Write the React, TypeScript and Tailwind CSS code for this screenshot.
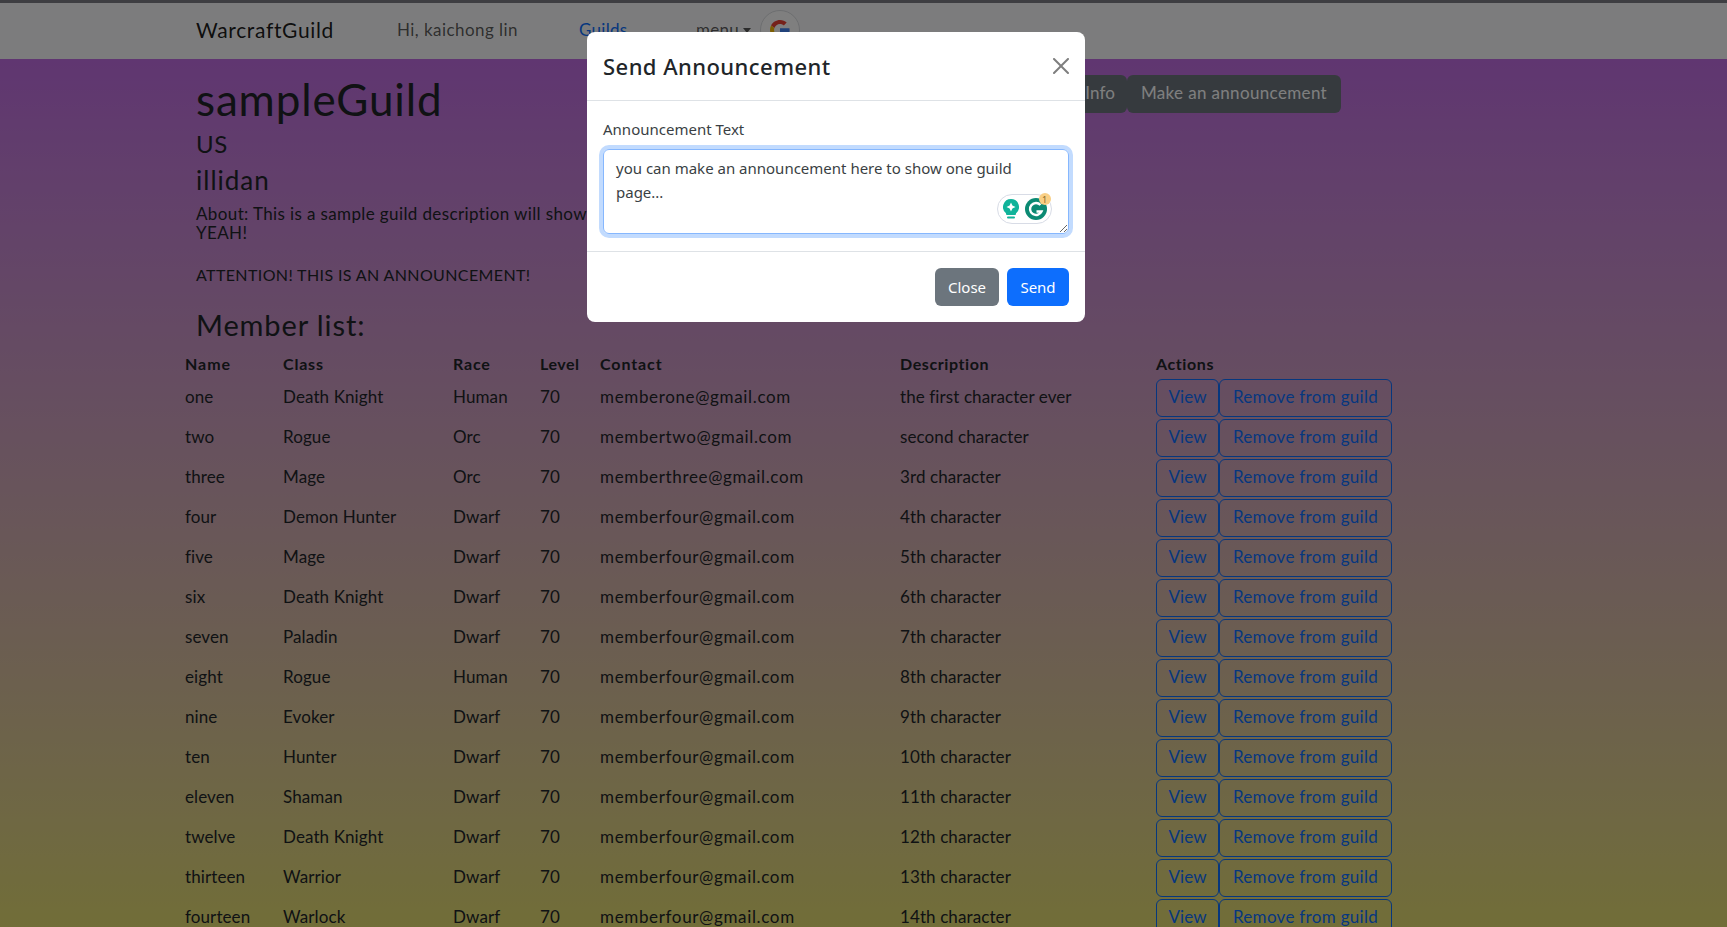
import React from "react";

const members = [
  ["one", "Death Knight", "Human", "memberone@gmail.com", "the first character ever"],
  ["two", "Rogue", "Orc", "membertwo@gmail.com", "second character"],
  ["three", "Mage", "Orc", "memberthree@gmail.com", "3rd character"],
  ["four", "Demon Hunter", "Dwarf", "memberfour@gmail.com", "4th character"],
  ["five", "Mage", "Dwarf", "memberfour@gmail.com", "5th character"],
  ["six", "Death Knight", "Dwarf", "memberfour@gmail.com", "6th character"],
  ["seven", "Paladin", "Dwarf", "memberfour@gmail.com", "7th character"],
  ["eight", "Rogue", "Human", "memberfour@gmail.com", "8th character"],
  ["nine", "Evoker", "Dwarf", "memberfour@gmail.com", "9th character"],
  ["ten", "Hunter", "Dwarf", "memberfour@gmail.com", "10th character"],
  ["eleven", "Shaman", "Dwarf", "memberfour@gmail.com", "11th character"],
  ["twelve", "Death Knight", "Dwarf", "memberfour@gmail.com", "12th character"],
  ["thirteen", "Warrior", "Dwarf", "memberfour@gmail.com", "13th character"],
  ["fourteen", "Warlock", "Dwarf", "memberfour@gmail.com", "14th character"],
];

function GoogleG() {
  return (
    <svg width="20" height="20" viewBox="0 0 48 48">
      <path fill="#EA4335" d="M24 9.5c3.54 0 6.71 1.22 9.21 3.6l6.85-6.85C35.9 2.38 30.47 0 24 0 14.62 0 6.51 5.38 2.56 13.22l7.98 6.19C12.43 13.72 17.74 9.5 24 9.5z" />
      <path fill="#4285F4" d="M46.98 24.55c0-1.57-.15-3.09-.38-4.55H24v9.02h12.94c-.58 2.96-2.26 5.48-4.78 7.18l7.73 6c4.51-4.18 7.09-10.36 7.09-17.65z" />
      <path fill="#FBBC05" d="M10.53 28.59c-.48-1.45-.76-2.99-.76-4.59s.27-3.14.76-4.59l-7.98-6.19C.92 16.46 0 20.12 0 24c0 3.88.92 7.54 2.56 10.78l7.97-6.19z" />
      <path fill="#34A853" d="M24 48c6.48 0 11.93-2.13 15.89-5.81l-7.73-6c-2.15 1.45-4.92 2.3-8.16 2.3-6.26 0-11.57-4.22-13.47-9.91l-7.98 6.19C6.51 42.62 14.62 48 24 48z" />
    </svg>
  );
}

export default function App() {
  return (
    <div className="relative h-[927px] overflow-hidden bg-[#f8f9fa] font-['Lato',sans-serif] text-[16px] text-[#212529]">
      <div className="h-[3px] bg-[#7c7c84]" />
      <nav className="flex h-[56px] items-center bg-[#f8f9fa] pb-[2px] pl-[196px]">
        <span className="w-[201px] text-[21px] tracking-[0.65px] text-[#000000e6]">WarcraftGuild</span>
        <span className="w-[182px] text-[17px] tracking-[0.45px] text-[#000000a6]">Hi, kaichong lin</span>
        <span className="w-[117px] text-[17px] tracking-[0.3px] text-[#0d6efd]">Guilds</span>
        <span className="flex w-[64px] items-center gap-[4px] text-[17px] tracking-[0.3px] text-[#000000a6]">
          menu
          <span className="h-0 w-0 border-x-[4px] border-t-[5px] border-x-transparent border-t-[#000000a6]" />
        </span>
        <span className="flex h-[40px] w-[40px] items-center justify-center rounded-full border border-[#dadce0] bg-white">
          <GoogleG />
        </span>
      </nav>

      <main className="h-[868px] bg-gradient-to-b from-[#c06ce2] to-[#e3dc70]">
        <div className="flex pl-[196px] pt-[16px]">
          <section className="w-[811px] shrink-0">
            <h1 className="text-[44px] leading-[48px] tracking-[0.85px] text-[#212529]">sampleGuild</h1>
            <h3 className="mt-[6px] text-[24px] leading-[29px] tracking-[0.7px]">US</h3>
            <h3 className="mt-[8px] text-[26px] leading-[29px] tracking-[1px]">illidan</h3>
            <p className="mt-[9px] text-[17px] leading-[19px] tracking-[0.38px]">
              About: This is a sample guild description will show here
              <br />
              YEAH!
            </p>
            <p className="mt-[23px] leading-[19px] tracking-[0.38px]">ATTENTION! THIS IS AN ANNOUNCEMENT!</p>
          </section>
          <div className="flex h-[38px] items-start">
            <button className="h-[38px] w-[120px] rounded-[6px] bg-[#6c757d] px-[12px] pb-[2px] text-right text-[17px] tracking-[0.1px] text-white">Edit Info</button>
            <button className="h-[38px] w-[214px] rounded-[6px] bg-[#6c757d] pb-[2px] text-[17px] tracking-[0.35px] text-white">Make an announcement</button>
          </div>
        </div>
        <h2 className="mt-[24px] pl-[196px] text-[29px] leading-[34px] tracking-[0.9px]">Member list:</h2>
        <div className="pl-[185px] pt-[10px]">
          <table className="w-[1207px] table-fixed border-collapse text-left">
            <thead>
              <tr className="h-[26px]">
                <th className="w-[98px] pb-[2px] font-bold tracking-[0.95px]">Name</th>
                <th className="w-[170px] pb-[2px] font-bold tracking-[0.8px]">Class</th>
                <th className="w-[87px] pb-[2px] font-bold tracking-[0.8px]">Race</th>
                <th className="w-[60px] pb-[2px] font-bold tracking-[0.5px]">Level</th>
                <th className="w-[300px] pb-[2px] font-bold tracking-[0.9px]">Contact</th>
                <th className="w-[256px] pb-[2px] font-bold tracking-[0.6px]">Description</th>
                <th className="pb-[2px] font-bold tracking-[0.6px]">Actions</th>
              </tr>
            </thead>
            <tbody className="text-[17px] tracking-[0.1px]">
              {members.map((m) => (
                <tr key={m[0]} className="h-[40px]">
                  <td className="pb-[2px]">{m[0]}</td>
                  <td className="pb-[2px]">{m[1]}</td>
                  <td className="pb-[2px]">{m[2]}</td>
                  <td className="pb-[2px]">70</td>
                  <td className="pb-[2px] tracking-[0.65px]">{m[3]}</td>
                  <td className="pb-[2px]">{m[4]}</td>
                  <td>
                    <div className="flex">
                      <button className="h-[38px] w-[63px] rounded-[6px] border border-[#0d6efd] pb-[2px] text-[#0d6efd]">View</button>
                      <button className="h-[38px] w-[173px] rounded-[6px] border border-[#0d6efd] pb-[2px] tracking-[0.3px] text-[#0d6efd]">Remove from guild</button>
                    </div>
                  </td>
                </tr>
              ))}
            </tbody>
          </table>
        </div>
      </main>

      <div className="fixed inset-0 bg-black/50" />

      <div className="fixed left-[587px] top-[32px] h-[290px] w-[498px] rounded-[8px] bg-white font-['Noto_Sans',sans-serif] text-[#212529]">
        <div className="flex h-[69px] items-center justify-between border-b border-[#dee2e6] px-[16px]">
          <h5 className="text-[22px] font-medium tracking-[0.45px]">Send Announcement</h5>
          <svg width="16" height="16" viewBox="0 0 16 16" className="opacity-50">
            <path d="M.293.293a1 1 0 0 1 1.414 0L8 6.586 14.293.293a1 1 0 1 1 1.414 1.414L9.414 8l6.293 6.293a1 1 0 0 1-1.414 1.414L8 9.414l-6.293 6.293a1 1 0 0 1-1.414-1.414L6.586 8 .293 1.707a1 1 0 0 1 0-1.414z" />
          </svg>
        </div>
        <div className="h-[151px] border-b border-[#dee2e6] px-[16px] pt-[16px]">
          <label className="block text-[15px] leading-[24px] text-[#3a3f44]">Announcement Text</label>
          <div className="relative mt-[8px]">
            <textarea
              readOnly
              className="block h-[85px] w-[466px] rounded-[6px] border border-[#86b7fe] px-[12px] py-[6px] text-[15px] leading-[24px] text-[#3a3f44] shadow-[0_0_0_4px_#c2dbfe] outline-none"
              defaultValue="you can make an announcement here to show one guild page..."
            />
            <div className="absolute left-[394px] top-[45px] flex h-[30px] w-[55px] items-center justify-center gap-[6px] rounded-full border border-[#d8dce6] bg-white">
              <svg width="16" height="20" viewBox="0 0 16 20">
                <path fill="#10b39a" d="M8 0a8 8 0 0 0-5 14.2V15a1 1 0 0 0 1 1h8a1 1 0 0 0 1-1v-.8A8 8 0 0 0 8 0z" />
                <path fill="#fff" d="M8 3.5 9.4 6.6 12.5 8 9.4 9.4 8 12.5 6.6 9.4 3.5 8 6.6 6.6z" />
                <rect x="4" y="17.5" width="8" height="2" rx="1" fill="#10b39a" />
              </svg>
              <span className="relative h-[22px] w-[22px]">
                <svg width="22" height="22" viewBox="0 0 22 22">
                  <circle cx="11" cy="11" r="11" fill="#0b8a73" />
                  <path fill="none" stroke="#fff" strokeWidth="2.4" d="M15.5 7a6 6 0 1 0 1 6.5H11.5" />
                </svg>
                <span className="absolute right-[-4px] top-[-5px] flex h-[12px] w-[12px] items-center justify-center rounded-full bg-[#f9cf85] text-[9px] leading-none text-[#8a6a25]">1</span>
              </span>
            </div>
          </div>
        </div>
        <div className="flex items-center justify-end gap-[8px] px-[16px] pt-[16px]">
          <button className="h-[38px] w-[64px] rounded-[6px] bg-[#6c757d] text-[15px] text-white">Close</button>
          <button className="h-[38px] w-[62px] rounded-[6px] bg-[#0d6efd] text-[15px] text-white">Send</button>
        </div>
      </div>
    </div>
  );
}
